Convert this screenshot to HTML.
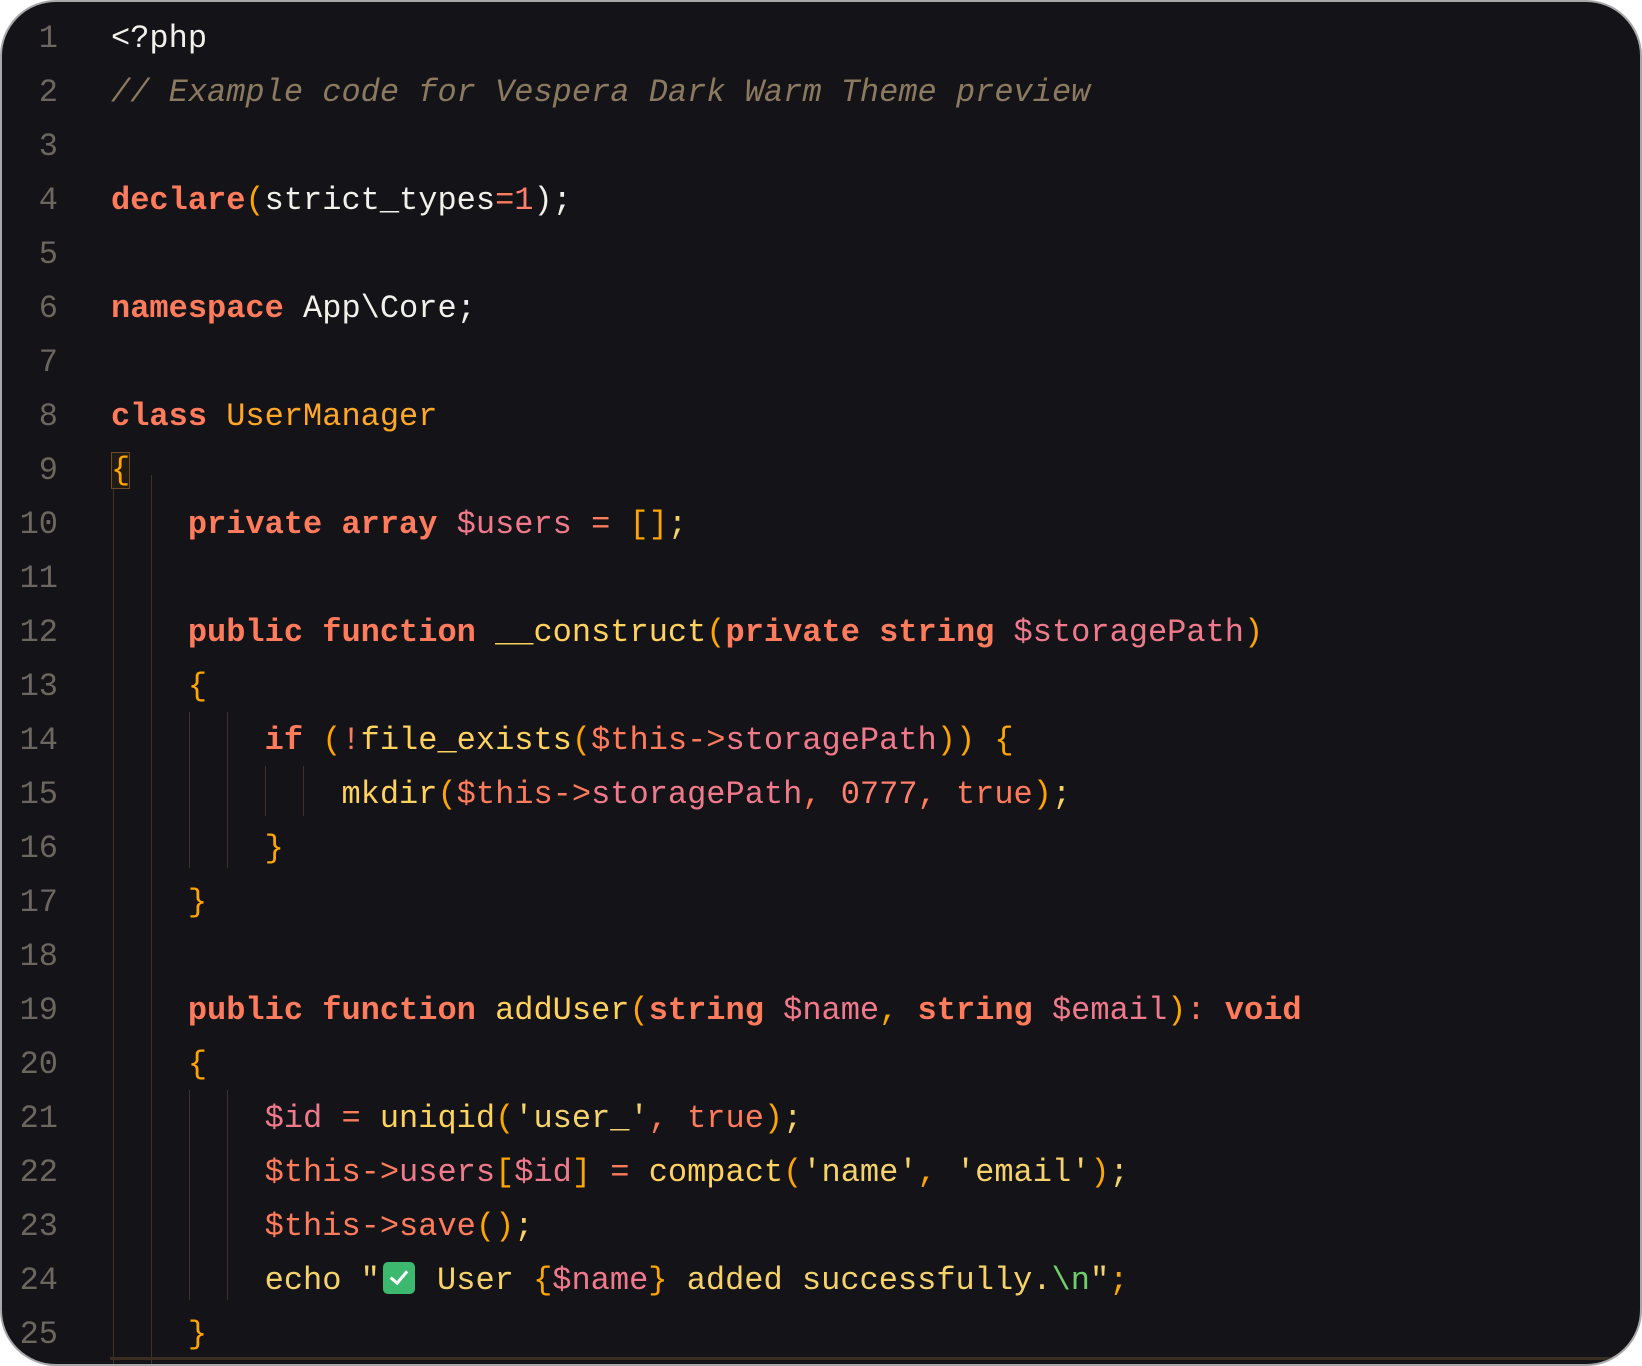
<!DOCTYPE html>
<html><head><meta charset="utf-8"><style>
html,body{margin:0;padding:0;background:#fff;width:1642px;height:1366px;overflow:hidden}
.card{position:absolute;left:0;top:0;width:1638px;height:1362px;background:#141418;border:2px solid #a8a8a8;border-radius:56px;overflow:hidden}
.ln{position:absolute;left:0;width:58px;text-align:right;color:#6c675e;font:32px/54px "Liberation Mono",monospace}
.code{position:absolute;left:111px;white-space:pre;color:#f2f0ea;font:32px/54px "Liberation Mono",monospace}
.k{color:#ff7b5c;font-weight:bold}
.v{color:#f07a8c}
.c{color:#ffa726}
.f{color:#ffd25e}
.s{color:#f6d36a}
.p{color:#ffa500}
.n{color:#ff7f6e}
.o{color:#ff7b5c}
.g{color:#6fcf6a}
.cm{color:#8c7a60;font-style:italic}
.guide{position:absolute;width:1px;background:#3d3426}
.emo{display:inline-block;width:32px;height:32px;margin:0 3px 0 3px;vertical-align:-5px;background:#3db86f;border-radius:5px;position:relative}
.emo:after{content:"";position:absolute;left:11px;top:5px;width:7px;height:14px;border:solid #fff;border-width:0 3px 3px 0;transform:rotate(40deg)}
.box{outline:1px solid #6b4a28;outline-offset:-1px;background:#221b14}
</style></head><body>
<div class="card">
<div class="guide" style="left:111px;top:473px;height:900px"></div>
<div class="guide" style="left:149px;top:473px;height:900px"></div>
<div class="guide" style="left:187px;top:710px;height:156px"></div>
<div class="guide" style="left:225px;top:710px;height:156px"></div>
<div class="guide" style="left:263px;top:764px;height:50px"></div>
<div class="guide" style="left:301px;top:764px;height:50px"></div>
<div class="guide" style="left:187px;top:1088px;height:210px"></div>
<div class="guide" style="left:225px;top:1088px;height:210px"></div>
<div style="position:absolute;left:108px;right:0;top:1355px;height:3px;background:#3a2e22"></div>
</div>
<div style="position:absolute;left:0;top:12px">
<div class="ln" style="position:relative">1<br>2<br>3<br>4<br>5<br>6<br>7<br>8<br>9<br>10<br>11<br>12<br>13<br>14<br>15<br>16<br>17<br>18<br>19<br>20<br>21<br>22<br>23<br>24<br>25</div>
</div>
<div class="code" style="top:12px">&lt;?php
<span class="cm">// Example code for Vespera Dark Warm Theme preview</span>

<span class="k">declare</span><span class="p">(</span>strict_types<span class="o">=</span><span class="n">1</span>);

<span class="k">namespace</span> App\Core;

<span class="k">class</span> <span class="c">UserManager</span>
<span class="p box">{</span>
    <span class="k">private</span> <span class="k">array</span> <span class="v">$users</span> <span class="o">=</span> <span class="p">[]</span><span class="s">;</span>

    <span class="k">public</span> <span class="k">function</span> <span class="f">__construct</span><span class="p">(</span><span class="k">private</span> <span class="k">string</span> <span class="v">$storagePath</span><span class="p">)</span>
    <span class="p">{</span>
        <span class="k">if</span> <span class="p">(</span><span class="o">!</span><span class="f">file_exists</span><span class="p">(</span><span class="o">$this-&gt;</span><span class="v">storagePath</span><span class="p">))</span> <span class="p">{</span>
            <span class="f">mkdir</span><span class="p">(</span><span class="o">$this-&gt;</span><span class="v">storagePath</span><span class="o">,</span> <span class="n">0777</span><span class="o">,</span> <span class="o">true</span><span class="p">)</span><span class="s">;</span>
        <span class="p">}</span>
    <span class="p">}</span>

    <span class="k">public</span> <span class="k">function</span> <span class="f">addUser</span><span class="p">(</span><span class="k">string</span> <span class="v">$name</span><span class="p">,</span> <span class="k">string</span> <span class="v">$email</span><span class="p">)</span><span class="o">:</span> <span class="k">void</span>
    <span class="p">{</span>
        <span class="v">$id</span> <span class="o">=</span> <span class="f">uniqid</span><span class="p">(</span><span class="s">'user_'</span><span class="o">,</span> <span class="o">true</span><span class="p">)</span><span class="s">;</span>
        <span class="o">$this-&gt;</span><span class="v">users</span><span class="p">[</span><span class="v">$id</span><span class="p">]</span> <span class="o">=</span> <span class="f">compact</span><span class="p">(</span><span class="s">'name'</span><span class="p">,</span> <span class="s">'email'</span><span class="p">)</span><span class="s">;</span>
        <span class="o">$this-&gt;</span><span class="o">save</span><span class="p">()</span><span class="s">;</span>
        <span class="s">echo "</span><span class="emo"></span><span class="s"> User </span><span class="p">{</span><span class="v">$name</span><span class="p">}</span><span class="s"> added successfully.</span><span class="g">\n</span><span class="s">"</span><span class="p">;</span>
    <span class="p">}</span></div>
</body></html>
